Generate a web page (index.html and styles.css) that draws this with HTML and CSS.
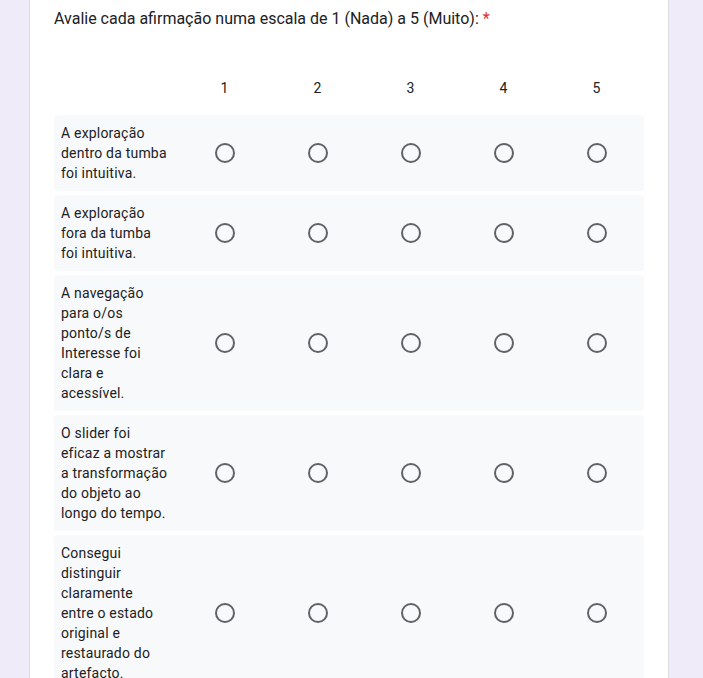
FILE: index.html
```html
<!DOCTYPE html>
<html lang="pt">
<head>
<meta charset="utf-8">
<link rel="stylesheet" href="styles.css">
</head>
<body>
<div class="card">
  <div class="title">Avalie cada afirmação numa escala de 1 (Nada) a 5 (Muito): <span class="req">*</span></div>
  <div class="grid">
    <div class="row head">
      <div class="label"></div>
      <div class="cell">1</div><div class="cell">2</div><div class="cell">3</div><div class="cell">4</div><div class="cell">5</div>
    </div>
    <div class="row item">
      <div class="label">A exploração dentro da tumba foi intuitiva.</div>
      <div class="cell"><span class="radio"></span></div><div class="cell"><span class="radio"></span></div><div class="cell"><span class="radio"></span></div><div class="cell"><span class="radio"></span></div><div class="cell"><span class="radio"></span></div>
    </div>
    <div class="row item">
      <div class="label">A exploração fora da tumba foi intuitiva.</div>
      <div class="cell"><span class="radio"></span></div><div class="cell"><span class="radio"></span></div><div class="cell"><span class="radio"></span></div><div class="cell"><span class="radio"></span></div><div class="cell"><span class="radio"></span></div>
    </div>
    <div class="row item">
      <div class="label">A navegação para o/os ponto/s de Interesse foi clara e acessível.</div>
      <div class="cell"><span class="radio"></span></div><div class="cell"><span class="radio"></span></div><div class="cell"><span class="radio"></span></div><div class="cell"><span class="radio"></span></div><div class="cell"><span class="radio"></span></div>
    </div>
    <div class="row item">
      <div class="label">O slider foi eficaz a mostrar a transformação do objeto ao longo do tempo.</div>
      <div class="cell"><span class="radio"></span></div><div class="cell"><span class="radio"></span></div><div class="cell"><span class="radio"></span></div><div class="cell"><span class="radio"></span></div><div class="cell"><span class="radio"></span></div>
    </div>
    <div class="row item">
      <div class="label">Consegui distinguir claramente entre o estado original e restaurado do artefacto.</div>
      <div class="cell"><span class="radio"></span></div><div class="cell"><span class="radio"></span></div><div class="cell"><span class="radio"></span></div><div class="cell"><span class="radio"></span></div><div class="cell"><span class="radio"></span></div>
    </div>
  </div>
</div>
</body>
</html>
```
FILE: styles.css
```css
html, body {
  margin: 0;
  padding: 0;
  background: #f0ebf8;
  font-family: Roboto, "Liberation Sans", Arial, sans-serif;
  color: #202124;
}
.card {
  box-sizing: border-box;
  width: 640px;
  margin-left: 29px;
  background: #fff;
  border: 1px solid #dadce0;
  border-top: none;
  padding: 7px 24px 24px 24px;
  min-height: 700px;
}
.title {
  font-size: 16px;
  line-height: 24px;
}
.req {
  color: #d93025;
}
.grid {
  display: flex;
  flex-direction: column;
  gap: 4px;
  margin-top: 37px;
}
.row {
  display: grid;
  grid-template-columns: 124px repeat(5, 93px) 1fr;
  align-items: center;
  width: 590px;
}
.head {
  height: 40px;
  margin-bottom: 3px;
  font-size: 14px;
}
.head .cell {
  text-align: center;
}
.item {
  background: #f8f9fa;
  border-radius: 4px;
  padding: 8px 0;
}
.label {
  font-size: 14px;
  line-height: 20px;
  letter-spacing: 0.2px;
  padding: 0 10px 0 7px;
}
.cell {
  display: flex;
  justify-content: center;
  font-size: 14px;
}
.radio {
  box-sizing: border-box;
  width: 20px;
  height: 20px;
  border: 2px solid #5f6368;
  border-radius: 50%;
}
```
